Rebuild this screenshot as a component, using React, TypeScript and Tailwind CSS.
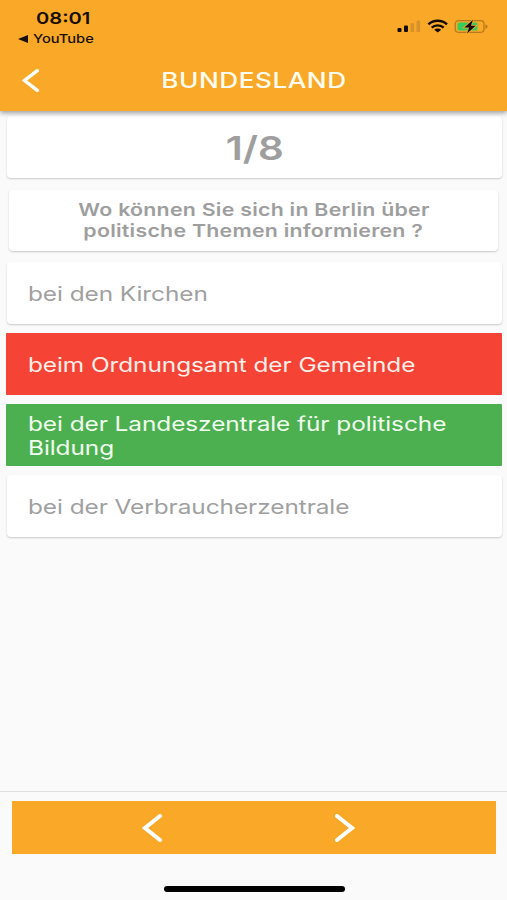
import type { ReactNode } from 'react';
import clsx from 'clsx';

interface Answer {
  lines: string[];
  state: 'idle' | 'wrong' | 'correct';
}

const ANSWERS: Answer[] = [
  { lines: ['bei den Kirchen'], state: 'idle' },
  { lines: ['beim Ordnungsamt der Gemeinde'], state: 'wrong' },
  { lines: ['bei der Landeszentrale für politische', 'Bildung'], state: 'correct' },
  { lines: ['bei der Verbraucherzentrale'], state: 'idle' },
];

function Wide({ children, className }: { children: ReactNode; className?: string }) {
  return <span className={clsx('block w-max scale-x-[1.22] whitespace-nowrap', className)}>{children}</span>;
}

function Chevron({ className }: { className?: string }) {
  return (
    <svg viewBox="0 0 20 28" fill="none" stroke="white" preserveAspectRatio="none" className={className}>
      <path d="M18 2 3 14l15 12" strokeWidth="4" strokeLinecap="round" />
    </svg>
  );
}

function StatusIcons() {
  return (
    <svg viewBox="0 0 92 16" className="h-4 w-[92px]">
      {/* Signal */}
      <rect x="0.5" y="9" width="4" height="4" rx="1" fill="#120b00" />
      <rect x="7" y="6.5" width="4" height="6.5" rx="1" fill="#120b00" />
      <rect x="13.5" y="4" width="3.6" height="9" rx="1" fill="#d8922a" />
      <rect x="19.5" y="1.5" width="3.6" height="11.5" rx="1" fill="#d8922a" />
      {/* Wifi */}
      <g fill="none" stroke="#120b00" strokeWidth="2.4">
        <path d="M31.4 5.4c5.2-4.8 13.4-4.8 18.6 0" />
        <path d="M34.7 8.6c3.3-3 8.7-3 12 0" />
      </g>
      <path d="M37.2 10.8c2-1.6 5-1.6 7 0l-3.5 2.6z" fill="#120b00" />
      {/* Battery */}
      <rect x="58.2" y="1.7" width="28.8" height="11.6" rx="3.2" fill="none" stroke="#b87a1c" strokeWidth="1.3" />
      <rect x="60.5" y="3.5" width="20" height="8" rx="1.5" fill="#36cb5b" />
      <path d="M88.4 5.2c2.8.8 2.8 3.8 0 4.6z" fill="#b87a1c" />
      <path d="M76 .8 67.3 8.4h4.8L70 14.4l8.8-7.7H74z" fill="#120b00" stroke="#f9a828" strokeWidth="1.6" paintOrder="stroke" />
    </svg>
  );
}

function AnswerCard({ answer }: { answer: Answer }) {
  return (
    <button
      className={clsx(
        'mr-[5px] flex h-[62px] flex-col justify-center pt-[3px] text-left text-[20px] leading-[23.4px]',
        answer.state === 'idle' && 'ml-[7px] rounded-[4px] bg-white pl-[21px] text-[#a0a0a0] shadow-[0_1px_2px_rgba(0,0,0,0.2)]',
        answer.state === 'wrong' && 'ml-[6px] rounded-[1px] bg-[#f54336] pl-[22px] text-[#fff0ea]',
        answer.state === 'correct' && 'ml-[6px] rounded-[1px] bg-[#4caf50] pl-[22px] text-[#f2fff0]',
      )}
    >
      {answer.lines.map((line) => (
        <Wide key={line} className="origin-left tracking-[-0.06px]">
          {line}
        </Wide>
      ))}
    </button>
  );
}

export default function App() {
  return (
    <div className="flex h-[900px] w-[507px] flex-col overflow-hidden bg-[#fafafa] font-['Inter',sans-serif]">
      {/* App bar */}
      <header className="relative z-10 flex h-[111px] shrink-0 flex-col bg-[#f9a828] shadow-[0_2px_5px_rgba(0,0,0,0.38)]">
        <div className="flex h-[50px] justify-between">
          <div className="pt-2 text-[#160e00]">
            <Wide className="ml-9 origin-left text-[16.5px] leading-5 font-semibold">08:01</Wide>
            <div className="flex items-center pl-[18px]">
              <svg viewBox="0 0 10 8" className="mr-[5px] h-2 w-[10px]">
                <path d="M0 4 10 0v8z" fill="#160e00" />
              </svg>
              <Wide className="origin-left text-[12px] leading-[21px] font-medium">YouTube</Wide>
            </div>
          </div>
          <div className="pt-[19px] pr-[18px]">
            <StatusIcons />
          </div>
        </div>
        <div className="grid h-[61px] grid-cols-[48px_1fr_48px] items-center">
          <button aria-label="Zurück" className="pl-[22px]">
            <Chevron className="h-[23px] w-[17px]" />
          </button>
          <h1 className="flex justify-center text-[21.5px] font-medium text-[#fffdf0]">
            <Wide className="tracking-[0.4px]">BUNDESLAND</Wide>
          </h1>
        </div>
      </header>

      {/* Quiz */}
      <main className="flex flex-1 flex-col">
        <div className="mr-[5px] ml-[7px] mt-[5px] flex h-[62px] items-center justify-center rounded-[4px] bg-white pt-[3px] text-[33px] font-semibold text-[#9e9e9e] shadow-[0_1px_2px_rgba(0,0,0,0.2)]">
          <Wide>1/8</Wide>
        </div>
        <div className="mx-[9px] mt-3 flex h-[61px] flex-col items-center justify-center rounded-[4px] bg-white pb-[2px] text-[17.5px] leading-[21px] font-semibold text-[#9e9e9e] shadow-[0_1px_2px_rgba(0,0,0,0.2)]">
          <Wide className="tracking-[0.2px]">Wo können Sie sich in Berlin über</Wide>
          <Wide className="tracking-[0.2px]">politische Themen informieren ?</Wide>
        </div>
        <div className="mt-[11px] flex flex-col gap-[9px]">
          {ANSWERS.map((answer) => (
            <AnswerCard key={answer.lines[0]} answer={answer} />
          ))}
        </div>
      </main>

      {/* Pager */}
      <footer className="flex h-[109px] shrink-0 flex-col border-t border-[#e0e0e0] px-3 pt-[9px]">
        <div className="mr-[-1px] flex h-[53px] items-center justify-center gap-[173px] bg-[#f9a828] pr-[11px]">
          <button aria-label="Vorherige Frage">
            <Chevron className="h-7 w-5" />
          </button>
          <button aria-label="Nächste Frage">
            <Chevron className="h-7 w-5 -scale-x-100" />
          </button>
        </div>
        <div className="mt-8 ml-px h-[6px] w-[181px] self-center rounded-full bg-black" />
      </footer>
    </div>
  );
}
